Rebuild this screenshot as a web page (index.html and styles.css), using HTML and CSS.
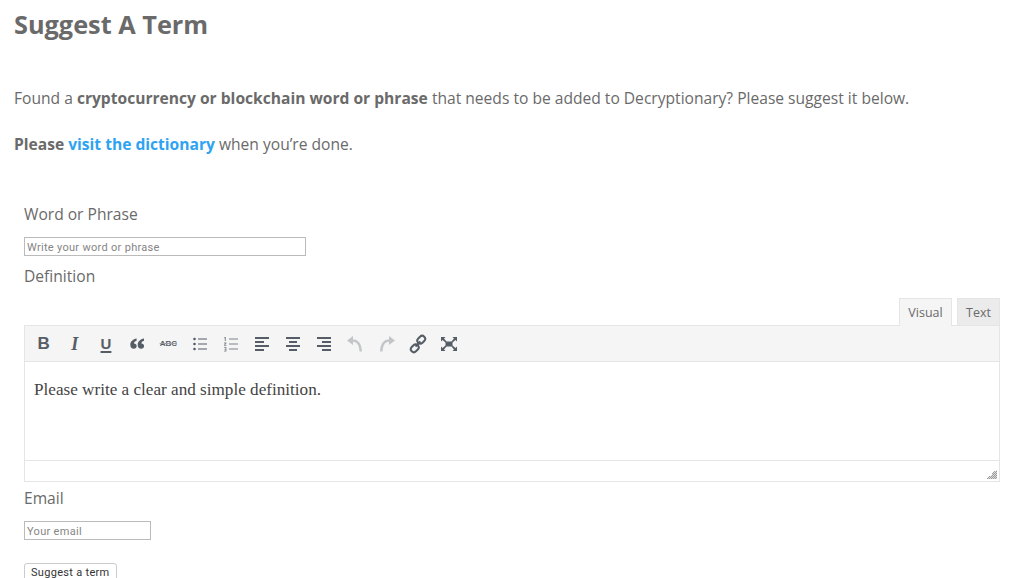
FILE: index.html
```html
<!DOCTYPE html>
<html>
<head>
    <meta charset="utf-8">
    <meta name="viewport" content="width=device-width">
    <title>Suggest A Term</title>
    <link rel="stylesheet" href="styles.css">
</head>

<body>
    <div class="page">
        <h1 class="page__title">Suggest A Term</h1>
        <p class="page__intro">Found a <b>cryptocurrency or blockchain word or phrase</b> that needs to be added to Decryptionary? Please suggest it below.</p>
        <p class="page__visit"><b>Please <a href="#">visit the dictionary</a></b> when you’re done.</p>

        <form class="form">
            <label class="form__label form__label--word" for="word">Word or Phrase</label>
            <input class="form__input form__input--word" id="word" type="text" placeholder="Write your word or phrase">

            <label class="form__label form__label--definition">Definition</label>
            <div class="editor">
                <div class="editor__tabs">
                    <span class="editor__tab editor__tab--active">Visual</span>
                    <span class="editor__tab">Text</span>
                </div>
                <div class="editor__box">
                    <div class="toolbar">
                        <span class="tool tool__text tool__text--bold">B</span>
                        <span class="tool tool__text tool__text--italic">I</span>
                        <span class="tool tool__text tool__text--under">U</span>
                        <span class="tool">
                            <svg viewBox="0 0 20 20" width="20" height="20"><path d="M9.600 4.600v2.200C7.900 7.300 7.100 8.300 7 9.400c1.500 0 2.700 1.100 2.700 2.600S8.500 14.800 6.800 14.800C4.700 14.800 3.300 13.200 3.300 10.800 3.300 7.700 5.900 5.300 9.600 4.600zM17 4.600v2.200c-1.700.5-2.500 1.500-2.600 2.600 1.500 0 2.700 1.100 2.700 2.600s-1.200 2.800-2.900 2.800c-2.100 0-3.500-1.600-3.500-4 0-3.100 2.600-5.500 6.300-6.200z"/></svg>
                        </span>
                        <span class="tool tool__text tool__text--strike">ABC</span>
                        <span class="tool">
                            <svg viewBox="0 0 20 20" width="20" height="20"><circle cx="4.500" cy="5" r="1.300"/><circle cx="4.500" cy="10" r="1.300"/><circle cx="4.500" cy="15" r="1.300"/><path d="M8 4.500h9v1H8zM8 9.500h9v1H8zM8 14.500h9v1H8z"/></svg>
                        </span>
                        <span class="tool tool--thin">
                            <svg viewBox="0 0 20 20" width="20" height="20"><path d="M3.500 3h1.300v4H3.800V4.200h-.6zM3 8.500h2.400v.9L4 11h1.500v.8H3v-.8l1.400-1.600H3zM3 13h2.400v4.500H3v-.8h1.500v-1H3.500v-.8h1V13.800H3zM8 4.500h9v1H8zM8 9.500h9v1H8zM8 14.500h9v1H8z"/></svg>
                        </span>
                        <span class="tool">
                            <svg viewBox="0 0 20 20" width="20" height="20"><path d="M3 3h14v2H3zM3 7h9v2H3zM3 11h14v2H3zM3 15h9v2H3z"/></svg>
                        </span>
                        <span class="tool">
                            <svg viewBox="0 0 20 20" width="20" height="20"><path d="M3 3h14v2H3zM6 7h8v2H6zM3 11h14v2H3zM6 15h8v2H6z"/></svg>
                        </span>
                        <span class="tool">
                            <svg viewBox="0 0 20 20" width="20" height="20"><path d="M3 3h14v2H3zM8 7h9v2H8zM3 11h14v2H3zM8 15h9v2H8z"/></svg>
                        </span>
                        <span class="tool tool--off">
                            <svg viewBox="0 0 20 20" width="20" height="20"><path d="M2 6.500 8 2v9zM7 5.300c5.500 0 9.500 3 10 12.200h-2.500C14 10 11.500 7.700 7 7.700z"/></svg>
                        </span>
                        <span class="tool tool--off">
                            <svg viewBox="0 0 20 20" width="20" height="20"><path d="M18 6.500 12 2v9zM13 5.300c-5.500 0-9.500 3-10 12.200h2.500C6 10 8.500 7.700 13 7.700z"/></svg>
                        </span>
                        <span class="tool">
                            <svg class="tool__link" viewBox="0 0 20 20" width="20" height="20"><rect x="9" y="2.700" width="8.500" height="6" rx="3" transform="rotate(-45 13.250 5.700)"/><rect x="2.500" y="11.300" width="8.500" height="6" rx="3" transform="rotate(-45 6.750 14.300)"/><path d="M7.500 12.500 12.500 7.500"/></svg>
                        </span>
                        <span class="tool">
                            <svg viewBox="0 0 20 20" width="20" height="20"><path d="M2 3h4.500L5 4.500 7.500 7.500h5L15 4.500 13.500 3H18v4.500L16.500 6 13.500 8.500v3L16.500 14 18 12.500V17h-4.500l1.500-1.500-2.500-3h-5L5 15.500 6.500 17H2v-4.500L3.500 14 6.500 11.500v-3L3.500 6 2 7.500z"/></svg>
                        </span>
                    </div>
                    <div class="editor__body">Please write a clear and simple definition.</div>
                    <div class="editor__status"><span class="editor__grip"></span></div>
                </div>
            </div>

            <label class="form__label form__label--email" for="email">Email</label>
            <input class="form__input form__input--email" id="email" type="text" placeholder="Your email">

            <button class="form__button" type="button">Suggest a term</button>
        </form>
    </div>
</body>
</html>
```

FILE: styles.css
```css
* {
    box-sizing: border-box;
}

html, body {
    margin: 0;
    padding: 0;
}

body {
    height: 578px;
    overflow: hidden;
    background: #fff;
    color: #6a6a6a;
    font: 15.600px/24px "Open Sans", Arial, sans-serif;
}

.page {
    padding: 7px 0 0 14px;
}

.page__title {
    margin: 0;
    font-size: 25.300px;
    line-height: 34px;
    font-weight: 700;
    color: #6a6a6a;
}

.page__intro {
    margin: 45px 0 0;
}

.page__visit {
    margin: 22px 0 0;
}

.page a {
    color: #2ea3f2;
    text-decoration: none;
}

.form {
    display: flex;
    flex-direction: column;
    align-items: flex-start;
    width: 976px;
    margin: 46px 0 0 10px;
}

.form__label {
    display: block;
    font-size: 15.600px;
    line-height: 24px;
}

.form__input {
    display: block;
    height: 19px;
    padding: 1px 2px 0;
    border: 1px solid #bbb;
    background: #fff;
    font: 11px/17px "Roboto", Arial, sans-serif;
    letter-spacing: 0.3px;
    border-radius: 0;
    outline: 0;
}

.form__input::placeholder {
    color: #858585;
    opacity: 1;
}

.form__input--word {
    width: 282px;
    margin-top: 11px;
}

.form__label--definition {
    margin-top: 8px;
}

.form__input--email {
    width: 127px;
    margin-top: 11px;
}

.form__label--email {
    margin-top: 4px;
}

.form__button {
    height: 19px;
    margin-top: 23px;
    padding: 0 6px;
    border: 1px solid #ccc;
    border-radius: 3px;
    background: #fff;
    color: #333;
    font: 11px/17px "Roboto", Arial, sans-serif;
    letter-spacing: 0.3px;
}

.editor {
    width: 100%;
    margin-top: 10px;
}

.editor__tabs {
    display: flex;
    justify-content: flex-end;
    gap: 5px;
    height: 27px;
}

.editor__tab {
    width: 43px;
    height: 27px;
    border: 1px solid #e5e5e5;
    border-bottom: 0;
    background: #ebebeb;
    color: #6a6a6a;
    font: 12.500px/27px "Open Sans", Arial, sans-serif;
    text-align: center;
}

.editor__tab--active {
    width: 53px;
    height: 28px;
    margin-bottom: -1px;
    background: #f5f5f5;
    position: relative;
}

.editor__box {
    border: 1px solid #e5e5e5;
}

.toolbar {
    display: flex;
    align-items: center;
    height: 36px;
    padding-left: 3px;
    border-bottom: 1px solid #e5e5e5;
    background: #f5f5f5;
}

.tool {
    display: flex;
    align-items: center;
    justify-content: center;
    width: 31.200px;
    height: 30px;
    color: #555d66;
}

.tool svg {
    fill: currentColor;
}

.tool--thin {
    color: #7d848b;
}

.tool--off {
    color: #c3c6c9;
}

.tool__link rect,
.tool__link path {
    fill: none;
    stroke: currentColor;
    stroke-width: 2;
}

.tool__text {
    font-size: 15px;
    line-height: 20px;
    font-family: "Liberation Sans", Arial, sans-serif;
}

.tool__text--bold {
    font-weight: 700;
    font-size: 17px;
}

.tool__text--italic {
    font-style: italic;
    font-family: "Liberation Serif", serif;
    font-weight: 700;
    font-size: 18px;
}

.tool__text--under {
    font-weight: 700;
    text-decoration: underline;
    text-decoration-thickness: 2px;
    text-underline-offset: 2px;
}

.tool__text--strike {
    font-size: 8px;
    font-weight: 700;
    text-decoration: line-through;
    text-decoration-thickness: 1px;
    text-decoration-color: #9aa0a6;
}

.editor__body {
    height: 98px;
    padding: 16px 9px 0;
    background: #fff;
    color: #444;
    font: 17.150px/24px "Liberation Serif", Georgia, serif;
}

.editor__status {
    position: relative;
    height: 21px;
    border-top: 1px solid #e5e5e5;
    background: #fff;
}

.editor__grip {
    position: absolute;
    right: 2px;
    bottom: 2px;
    width: 10px;
    height: 10px;
    background: linear-gradient(135deg, #fff 50%, transparent 50%), repeating-conic-gradient(#999 0 25%, #ddd 0 50%) 0 0 / 2px 2px;
}
```
